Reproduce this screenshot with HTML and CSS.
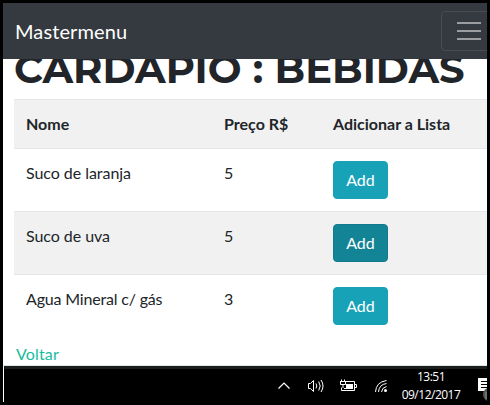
FILE: index.html
```html
<!DOCTYPE html>
<html lang="pt-BR">
<head>
<meta charset="utf-8">
<title>Mastermenu</title>
<link rel="stylesheet" href="styles.css">
</head>
<body>
<div class="screen">
  <nav class="navbar">
    <a class="brand">Mastermenu</a>
    <button class="toggler" aria-label="Menu">
      <svg width="30" height="30" viewBox="0 0 30 30"><path d="M3 7h24M3 15h24M3 23h24" stroke="#9b9da0" stroke-width="2"/></svg>
    </button>
  </nav>
  <main class="content">
    <div class="title-clip"><h1>CARDAPIO : BEBIDAS</h1></div>
    <table class="menu">
      <thead><tr><th class="c1">Nome</th><th class="c2">Preço R$</th><th>Adicionar a Lista</th></tr></thead>
      <tbody>
        <tr><td>Suco de laranja</td><td>5</td><td><button class="btn">Add</button></td></tr>
        <tr class="odd"><td>Suco de uva</td><td>5</td><td><button class="btn active">Add</button></td></tr>
        <tr><td class="tight">Agua Mineral c/ gás</td><td>3</td><td><button class="btn">Add</button></td></tr>
      </tbody>
    </table>
    <a class="back">Voltar</a>
  </main>
  <footer class="taskbar">
    <svg class="tray" width="126" height="20" viewBox="0 0 126 20" fill="none" stroke="#fff">
      <path d="M4.500 12.500l5.500-5.500 5.500 5.500" stroke-width="1.200"/>
      <path d="M34.500 7.500h2l3-3v11l-3-3h-2zM42 7.500q1.600 2.500 0 5M44.700 5.500q3 4.500 0 9M47 4q4 6 0 12"/>
      <path d="M72 5.500h8.500v9h-13v-3M81 8.500h1.500v3H81"/>
      <path d="M72 8h7v5h-9v-1h2z" fill="#fff" stroke="none"/>
      <path d="M67.500 3.500v2M70.500 3.500v2M66 5.500h6M66.500 6v2.500h5V6M69 9v3"/>
      <path d="M101.500 16Q102 6 112.500 4.500M104.500 16Q105 8.500 112.500 7.500M107.500 16Q108 11.500 112.500 10.500"/>
      <circle cx="111.500" cy="14.500" r="1.500" fill="#fff" stroke="none"/>
    </svg>
    <div class="clock"><span>13:51</span><span>09/12/2017</span></div>
    <svg class="notice" width="9" height="24" viewBox="0 0 9 24">
      <path d="M0 1h9v13H5v0H0z" fill="#fff"/>
      <path d="M3 4.500h6M3 7.500h6M3 10.500h6" stroke="#000"/>
      <circle cx="12" cy="17.500" r="7" fill="#555"/>
      <path d="M8 15v7" stroke="#888"/>
    </svg>
  </footer>
</div>
</body>
</html>
```
FILE: styles.css
```css
* { box-sizing: border-box; }
body { margin: 0; font: 16px/24px Lato, sans-serif; color: #212529; }
.screen { width: 490px; height: 405px; border: 3px solid #000; background: #fff; overflow: hidden; display: flex; flex-direction: column; }
.navbar { height: 56px; flex: none; background: #343a40; display: flex; align-items: center; padding-left: 12px; overflow: hidden; }
.brand { color: #fff; font-size: 20px; line-height: 30px; letter-spacing: .1px; flex: 1; }
.toggler { width: 56px; height: 40px; flex: none; margin-right: -10px; padding: 4px 12px; border: 1px solid #484d52; border-radius: 4px; background: none; }
.toggler svg { display: block; }
.content { height: 307px; flex: none; padding-left: 11px; border-bottom: 1px solid #dce5e3; overflow: hidden; }
.title-clip { height: 40px; overflow: hidden; display: flex; align-items: flex-end; }
h1 { margin: 0 0 6px; font: 700 40px/48px Montserrat, Inter, sans-serif; white-space: nowrap; }
.menu { width: 473px; border-collapse: separate; border-spacing: 0; table-layout: fixed; }
.menu th, .menu td { padding: 12px; border-top: 1px solid #e4e7ea; text-align: left; vertical-align: top; white-space: nowrap; }
.menu td { letter-spacing: -.05px; }
.menu .tight { letter-spacing: -.18px; }
.c1 { width: 198px; }
.c2 { width: 109px; }
.menu th, .odd td { background: #f1f1f1; }
.btn { display: block; width: 55px; height: 38px; padding: 0; font: 16px/24px Lato, sans-serif; color: #fff; background: #17a2b8; border: 1px solid #17a2b8; border-radius: 4px; }
.btn.active { background: #138496; border-color: #117a8b; }
.back { display: block; margin: 5px 0 0 2px; letter-spacing: .15px; color: #18bc9c; }
.taskbar { height: 36px; flex: none; margin-left: 1px; border-top: 3px solid #1b1e1f; background: #000; display: flex; align-items: flex-start; color: #fff; }
.tray { flex: none; margin: 7px 0 0 270px; }
.clock { width: 72px; display: flex; flex-direction: column; align-items: center; font: 12px/18px "Open Sans", sans-serif; letter-spacing: -.5px; margin: -1px 0 0 -5px; }
.notice { margin: 8px 0 0 auto; }
```
